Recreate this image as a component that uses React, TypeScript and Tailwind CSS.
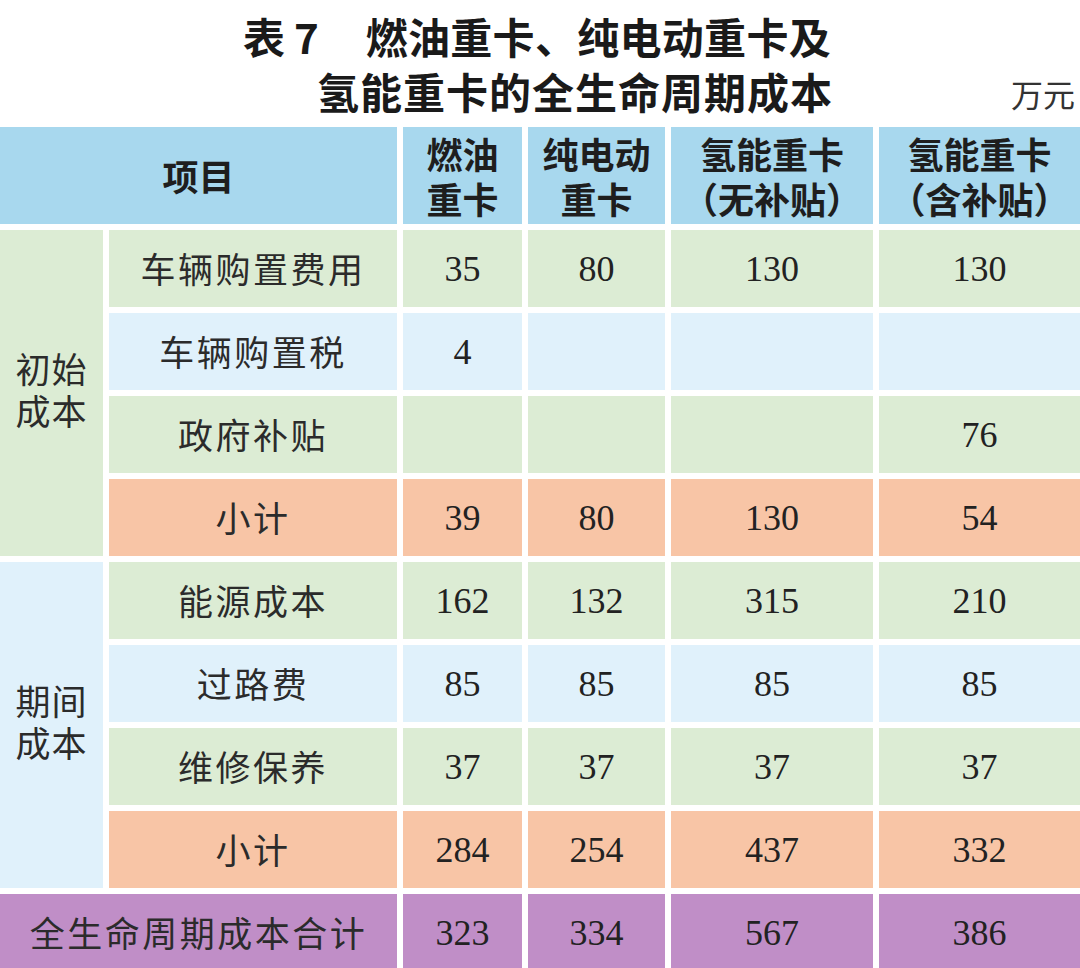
const cjk = "font-['Noto_Sans_CJK_SC',sans-serif]"

type Row = { name: string; bg: string; vals: string[] }

const rows1: Row[] = [
  { name: '车辆购置费用', bg: 'bg-[#dcecd4]', vals: ['35', '80', '130', '130'] },
  { name: '车辆购置税', bg: 'bg-[#e0f1fb]', vals: ['4', '', '', ''] },
  { name: '政府补贴', bg: 'bg-[#dcecd4]', vals: ['', '', '', '76'] },
  { name: '小计', bg: 'bg-[#f8c5a6]', vals: ['39', '80', '130', '54'] },
]

const rows2: Row[] = [
  { name: '能源成本', bg: 'bg-[#dcecd4]', vals: ['162', '132', '315', '210'] },
  { name: '过路费', bg: 'bg-[#e0f1fb]', vals: ['85', '85', '85', '85'] },
  { name: '维修保养', bg: 'bg-[#dcecd4]', vals: ['37', '37', '37', '37'] },
  { name: '小计', bg: 'bg-[#f8c5a6]', vals: ['284', '254', '437', '332'] },
]

function NameCell({ text, bg }: { text: string; bg: string }) {
  return (
    <div className={`${bg} flex items-center justify-center ${cjk} text-[35px] tracking-[2.5px] text-[#2b2b2b]`}>
      {text}
    </div>
  )
}

function NumCell({ text, bg }: { text: string; bg: string }) {
  return (
    <div className={`${bg} flex items-center justify-center font-['Liberation_Serif',serif] text-[36px] text-[#222]`}>
      {text}
    </div>
  )
}

function HeadCell({ lines, className = '' }: { lines: string[]; className?: string }) {
  return (
    <div className={`bg-[#a8d8ee] flex flex-col items-center justify-center ${cjk} font-bold text-[36px] leading-[45px] text-[#1e1e1e] ${className}`}>
      {lines.map((l, i) => (
        <span key={i}>{l}</span>
      ))}
    </div>
  )
}

function Group({ label, bg, rows, start }: { label: string[]; bg: string; rows: Row[]; start: string }) {
  return (
    <>
      <div className={`${bg} ${start} row-span-4 col-start-1 flex flex-col items-center justify-center pb-[8px] ${cjk} text-[35px] leading-[42px] tracking-[1px] text-[#2b2b2b]`}>
        {label.map((l, i) => (
          <span key={i}>{l}</span>
        ))}
      </div>
      {rows.map((r, i) => (
        <div key={i} className="contents">
          <NameCell text={r.name} bg={r.bg} />
          {r.vals.map((v, j) => (
            <NumCell key={j} text={v} bg={r.bg} />
          ))}
        </div>
      ))}
    </>
  )
}

export default function App() {
  return (
    <div className="w-[1080px] h-[968px] overflow-hidden bg-white">
      <div className={`pt-[8px] ${cjk} font-bold text-[42px] leading-[55px] text-[#1a1a1a]`}>
        <div className="flex justify-end pr-[249px]">
          <span>表</span>
          <span className="ml-[9px] mr-[47px]">7</span>
          <span className="tracking-[0.3px]">燃油重卡、纯电动重卡及</span>
        </div>
        <div className="flex justify-end items-start h-[55px] pr-[5px]">
          <span className="tracking-[1px]">氢能重卡的全生命周期成本</span>
          <span className="ml-[178px] pt-[6px] leading-[49px] font-normal text-[32px] text-[#333]">万元</span>
        </div>
      </div>

      <div className="mt-[9px] grid grid-cols-[103px_288px_119px_137px_202px_1fr] grid-rows-[97px_repeat(9,77px)] gap-[6px]">
        <HeadCell lines={['项目']} className="col-span-2" />
        <HeadCell lines={['燃油', '重卡']} />
        <HeadCell lines={['纯电动', '重卡']} />
        <HeadCell lines={['氢能重卡', '（无补贴）']} />
        <HeadCell lines={['氢能重卡', '（含补贴）']} />

        <Group label={['初始', '成本']} bg="bg-[#dcecd4]" rows={rows1} start="row-start-2" />
        <Group label={['期间', '成本']} bg="bg-[#e0f1fb]" rows={rows2} start="row-start-6" />

        <div className={`col-span-2 bg-[#c08ec7] flex items-center justify-center ${cjk} text-[35px] tracking-[2.5px] text-[#2b2b2b]`}>
          全生命周期成本合计
        </div>
        {['323', '334', '567', '386'].map((v) => (
          <NumCell key={v} text={v} bg="bg-[#c08ec7]" />
        ))}
      </div>
    </div>
  )
}
